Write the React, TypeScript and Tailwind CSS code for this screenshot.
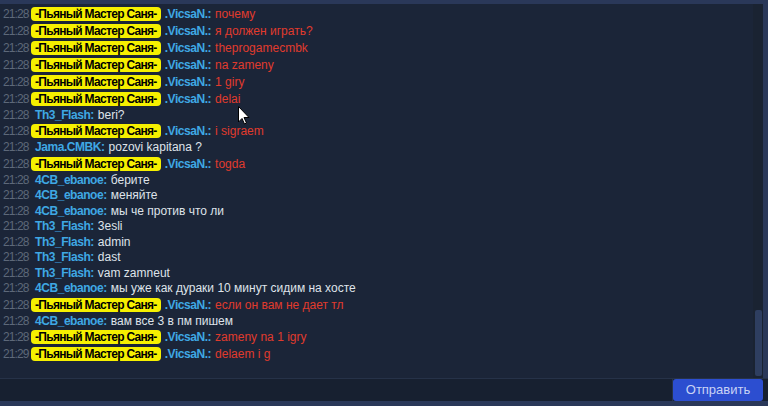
import React from "react";

type Msg = { t: string; badge?: boolean; name: string; text: string };

const V = ".VicsaN.:";
const msgs: Msg[] = [
  { t: "21:28", badge: true, name: V, text: "почему" },
  { t: "21:28", badge: true, name: V, text: "я должен играть?" },
  { t: "21:28", badge: true, name: V, text: "theprogamecmbk" },
  { t: "21:28", badge: true, name: V, text: "na zameny" },
  { t: "21:28", badge: true, name: V, text: "1 giry" },
  { t: "21:28", badge: true, name: V, text: "delai" },
  { t: "21:28", name: "Th3_Flash:", text: "beri?" },
  { t: "21:28", badge: true, name: V, text: "i sigraem" },
  { t: "21:28", name: "Jama.CMBK:", text: "pozovi kapitana ?" },
  { t: "21:28", badge: true, name: V, text: "togda" },
  { t: "21:28", name: "4CB_ebanoe:", text: "берите" },
  { t: "21:28", name: "4CB_ebanoe:", text: "меняйте" },
  { t: "21:28", name: "4CB_ebanoe:", text: "мы че против что ли" },
  { t: "21:28", name: "Th3_Flash:", text: "3esli" },
  { t: "21:28", name: "Th3_Flash:", text: "admin" },
  { t: "21:28", name: "Th3_Flash:", text: "dast" },
  { t: "21:28", name: "Th3_Flash:", text: "vam zamneut" },
  { t: "21:28", name: "4CB_ebanoe:", text: "мы уже как дураки 10 минут сидим на хосте" },
  { t: "21:28", badge: true, name: V, text: "если он вам не дает тл" },
  { t: "21:28", name: "4CB_ebanoe:", text: "вам все 3 в пм пишем" },
  { t: "21:28", badge: true, name: V, text: "zameny na 1 igry" },
  { t: "21:29", badge: true, name: V, text: "delaem i g" },
];

function Row({ m }: { m: Msg }) {
  return (
    <div
      className={
        "flex items-center whitespace-nowrap " +
        (m.badge ? "h-[17px]" : "h-[15.5px]")
      }
    >
      <span className="w-[31px] pl-[3px] text-[12px] tracking-[-0.9px] text-[#5d6879]">{m.t}</span>
      {m.badge ? (
        <span className="mr-[4px] flex h-[14px] items-center rounded-[4px] bg-[#f6f000] px-[4px] text-[12px] font-bold tracking-[-0.7px] text-black">
          -Пьяный Мастер Саня-
        </span>
      ) : (
        <span className="w-[4px]" />
      )}
      <span className="mr-[4px] text-[12px] font-bold tracking-[-0.45px] text-[#3fa8e4]">{m.name}</span>
      <span
        className={
          "text-[12px] " + (m.badge ? "text-[#e03b2d]" : "text-[#dfe3ea]")
        }
      >
        {m.text}
      </span>
    </div>
  );
}

export default function App() {
  return (
    <div
      className="relative flex h-[406px] w-[768px] flex-col overflow-hidden bg-[#2a3859]"
      style={{ fontFamily: '"Liberation Sans", Arial, sans-serif' }}
    >
      <div className="mt-[4px] flex h-[374px] mr-[5px]">
        <div className="flex-1 bg-[#1b2538] pt-[1px]">
          {msgs.map((m, i) => (
            <Row key={i} m={m} />
          ))}
        </div>
        <div className="flex w-[10px] flex-col justify-end bg-[#1a2332] pb-[2px] pl-[2px] pr-[1px]">
          <div className="h-[66px] rounded-[2px] bg-[#2e3e60]" />
        </div>
      </div>
      <div className="h-[1px] bg-[#263248]" />
      <div className="flex h-[22px] bg-[#172030]">
        <div className="flex-1 border-r border-[#263248]" />
        <button className="mr-[5px] flex h-[22px] w-[90px] items-center justify-center rounded-[3px] bg-[#2c4ed0] text-[13px] text-[#c9d3f5]">
          Отправить
        </button>
      </div>
      <div className="flex-1 bg-[#2a3859]" />
      <svg
        className="absolute left-[238px] top-[106px]"
        width="12"
        height="19"
        viewBox="0 0 12 19"
      >
        <path
          d="M0.5 0.5 L0.5 16 L4 12.5 L6.5 18 L8.5 17 L6 11.5 L11 11.5 Z"
          fill="#ffffff"
          stroke="#000000"
          strokeWidth="1"
        />
      </svg>
    </div>
  );
}
